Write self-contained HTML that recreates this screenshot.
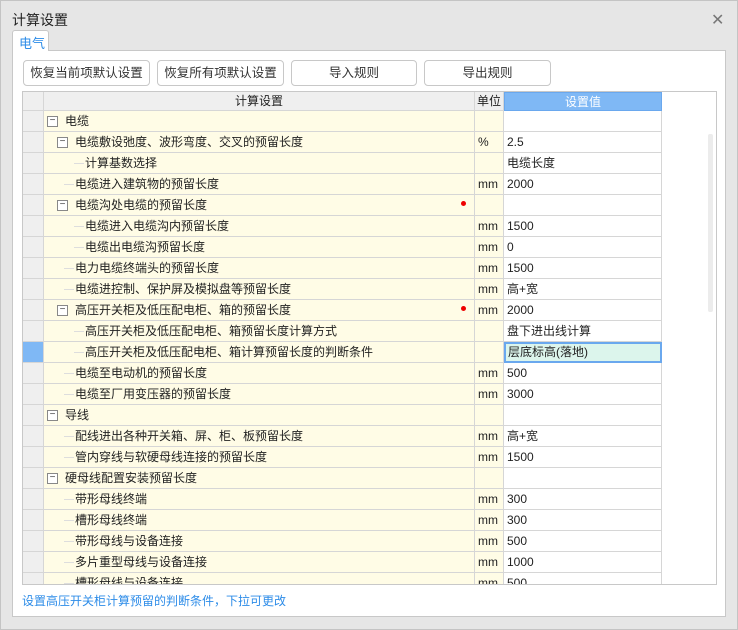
<!DOCTYPE html>
<html><head><meta charset="utf-8"><style>
*{margin:0;padding:0;box-sizing:border-box}
body{width:738px;height:630px;overflow:hidden;background:#e6e6e6;font-family:"Liberation Sans","Noto Sans CJK SC",sans-serif;font-size:12px;color:#222;position:relative}
.win{position:absolute;left:0;top:0;width:738px;height:630px;border:1px solid #c4c4c4}
.title{position:absolute;left:12px;top:10px;font-size:14px;color:#222}
.close{position:absolute;left:711px;top:10px;font-size:16px;color:#777}
.tab{position:absolute;left:12px;top:30px;width:37px;height:21px;background:#fff;border:1px solid #c8c8c8;border-bottom:none;border-radius:3px 3px 0 0;color:#2d8ce8;font-size:13px;padding:2px 0 0 6px;z-index:2}
.panel{position:absolute;left:12px;top:50px;width:714px;height:567px;background:#fff;border:1px solid #c8c8c8}
.btn{position:absolute;top:60px;height:26px;border:1px solid #c8c8c8;border-radius:4px;background:#fff;text-align:center;line-height:24px;font-size:12.5px;color:#333}
.grid{position:absolute;left:22px;top:91px;width:695px;height:494px;border:1px solid #c8c8c8;overflow:hidden;background:#fff}
.row{position:absolute;left:0;height:21px;width:639px}
.c{position:absolute;top:0;height:21px;border-right:1px solid #d6d6d6;border-bottom:1px solid #d6d6d6;line-height:20px;white-space:nowrap;overflow:hidden}
.s{left:0;width:21px;background:#efefef}
.t{left:21px;width:431px;background:#fffce6}
.u{left:452px;width:29px;background:#fffce6;padding-left:3px}
.v{left:481px;width:158px;background:#fff;padding-left:3px}
.box{position:absolute;top:5px;width:11px;height:11px;border:1px solid #888;background:#fff;font-size:10px;line-height:8px;text-align:center;color:#444}
.ln{position:absolute;top:10px;height:1px;width:10px;background:#ddd}
.dot{position:absolute;left:417px;top:6px;width:5px;height:5px;border-radius:50%;background:#e00}
.hdr{position:absolute;top:0;height:19px;line-height:18px;text-align:center;border-right:1px solid #d6d6d6;border-bottom:1px solid #d6d6d6;background:#efefef}
</style></head><body>
<div class="win"></div>
<div class="title">计算设置</div>
<div class="close">✕</div>
<div class="panel"></div>
<div class="tab">电气</div>
<div class="btn" style="left:23px;width:127px">恢复当前项默认设置</div>
<div class="btn" style="left:157px;width:127px">恢复所有项默认设置</div>
<div class="btn" style="left:291px;width:126px">导入规则</div>
<div class="btn" style="left:424px;width:127px">导出规则</div>
<div class="grid">
<div class="hdr" style="left:0;width:21px"></div>
<div class="hdr" style="left:21px;width:431px">计算设置</div>
<div class="hdr" style="left:452px;width:29px">单位</div>
<div class="hdr" style="left:481px;width:158px;background:#7fb8f5;color:#fff;border:1px solid #6aa8ee">设置值</div>
<div style="position:absolute;left:685px;top:42px;width:5px;height:178px;background:#ececec;border-radius:2px"></div>
<div id="rows"></div>
</div>
<div style="position:absolute;left:22px;top:592px;color:#2d8ce8;font-size:12px">设置高压开关柜计算预留的判断条件，下拉可更改</div>
<script>
var R=[
[0,1,"电缆","",""],
[1,1,"电缆敷设弛度、波形弯度、交叉的预留长度","%","2.5"],
[2,0,"计算基数选择","","电缆长度"],
[1,0,"电缆进入建筑物的预留长度","mm","2000"],
[1,1,"电缆沟处电缆的预留长度","","",1],
[2,0,"电缆进入电缆沟内预留长度","mm","1500"],
[2,0,"电缆出电缆沟预留长度","mm","0"],
[1,0,"电力电缆终端头的预留长度","mm","1500"],
[1,0,"电缆进控制、保护屏及模拟盘等预留长度","mm","高+宽"],
[1,1,"高压开关柜及低压配电柜、箱的预留长度","mm","2000",1],
[2,0,"高压开关柜及低压配电柜、箱预留长度计算方式","","盘下进出线计算"],
[2,0,"高压开关柜及低压配电柜、箱计算预留长度的判断条件","","层底标高(落地)",0,1],
[1,0,"电缆至电动机的预留长度","mm","500"],
[1,0,"电缆至厂用变压器的预留长度","mm","3000"],
[0,1,"导线","",""],
[1,0,"配线进出各种开关箱、屏、柜、板预留长度","mm","高+宽"],
[1,0,"管内穿线与软硬母线连接的预留长度","mm","1500"],
[0,1,"硬母线配置安装预留长度","",""],
[1,0,"带形母线终端","mm","300"],
[1,0,"槽形母线终端","mm","300"],
[1,0,"带形母线与设备连接","mm","500"],
[1,0,"多片重型母线与设备连接","mm","1000"],
[1,0,"槽形母线与设备连接","mm","500"]];
var h="";
R.forEach(function(r,i){
 var top=19+21*i,lv=r[0],tx=[42,52,62][lv]-21+21;
 var tree="";
 if(r[1]){var bx=[3,13,23][lv];tree+='<div class="box" style="left:'+bx+'px">−</div>';}
 else{tree+='<div class="ln" style="left:'+([0,10,20][lv]+10)+'px"></div>';}
 tree+='<span style="position:absolute;left:'+([21,31,41][lv])+'px">'+r[2]+'</span>';
 if(r[5])tree+='<div class="dot"></div>';
 var sel=r[6];
 h+='<div class="row" style="top:'+top+'px"><div class="c s"'+(sel?' style="background:#7fb8f5"':'')+'></div><div class="c t">'+tree+'</div><div class="c u">'+r[3]+'</div><div class="c v"'+(sel?' style="background:#dcf5ec;border:2px solid #6aa8ee;line-height:17px;padding-left:2px"':'')+'>'+r[4]+'</div></div>';
});
document.getElementById("rows").innerHTML=h;
</script>
</body></html>
